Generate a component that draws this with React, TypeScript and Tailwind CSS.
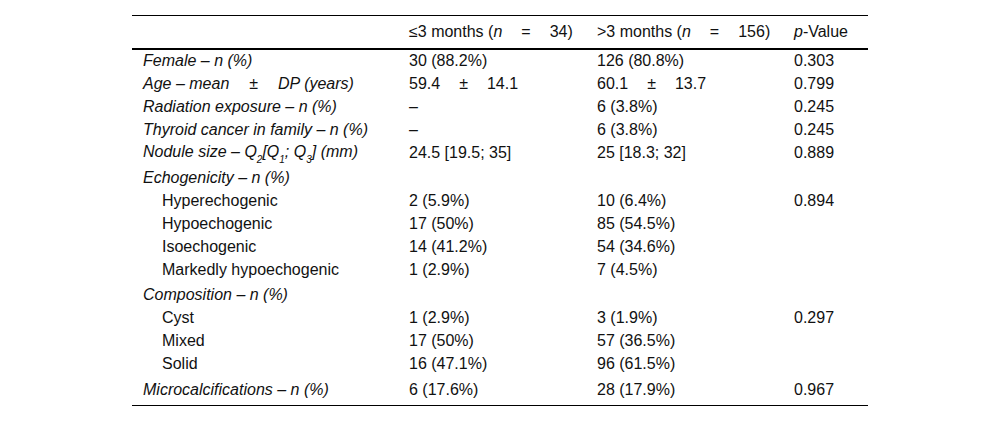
import React from "react";

type Row = {
  label: React.ReactNode;
  a?: React.ReactNode;
  b?: React.ReactNode;
  p?: string;
  sub?: boolean;
  cls?: string;
};

const PM = () => <span className="mx-[19px]">±</span>;
const Sub = ({ c }: { c: string }) => <sub className="text-[10px] align-[-3px] leading-none">{c}</sub>;

const rows: Row[] = [
  { label: <i>Female – n (%)</i>, a: "30 (88.2%)", b: "126 (80.8%)", p: "0.303" },
  {
    label: (
      <i>
        Age – mean<span className="mx-[20px]">±</span>DP (years)
      </i>
    ),
    a: (
      <>
        59.4<PM />14.1
      </>
    ),
    b: (
      <>
        60.1<PM />13.7
      </>
    ),
    p: "0.799",
  },
  { label: <i>Radiation exposure – n (%)</i>, a: "–", b: "6 (3.8%)", p: "0.245" },
  { label: <i>Thyroid cancer in family – n (%)</i>, a: "–", b: "6 (3.8%)", p: "0.245" },
  {
    label: (
      <i>
        Nodule size – Q<Sub c="2" />[Q<Sub c="1" />; Q<Sub c="3" />] (mm)
      </i>
    ),
    a: "24.5 [19.5; 35]",
    b: "25 [18.3; 32]",
    p: "0.889",
  },
  { label: <i>Echogenicity – n (%)</i>, cls: "h-[25px] pt-[2px]" },
  { label: "Hyperechogenic", sub: true, a: "2 (5.9%)", b: "10 (6.4%)", p: "0.894" },
  { label: "Hypoechogenic", sub: true, a: "17 (50%)", b: "85 (54.5%)" },
  { label: "Isoechogenic", sub: true, a: "14 (41.2%)", b: "54 (34.6%)" },
  { label: "Markedly hypoechogenic", sub: true, a: "1 (2.9%)", b: "7 (4.5%)" },
  { label: <i>Composition – n (%)</i>, cls: "h-[25px] pt-[2px]" },
  { label: "Cyst", sub: true, a: "1 (2.9%)", b: "3 (1.9%)", p: "0.297" },
  { label: "Mixed", sub: true, a: "17 (50%)", b: "57 (36.5%)" },
  { label: "Solid", sub: true, a: "16 (47.1%)", b: "96 (61.5%)" },
  {
    label: <i>Microcalcifications – n (%)</i>,
    a: "6 (17.6%)",
    b: "28 (17.9%)",
    p: "0.967",
    cls: "h-[31px] pt-[4px] pb-[4px]",
  },
];

export default function App() {
  return (
    <div
      className="bg-white w-[1000px] h-[421px] pt-[15px] text-[16px] text-[#111]"
      style={{ fontFamily: '"Liberation Sans", Arial, sans-serif' }}
    >
      <table className="mx-auto w-[736px] border-collapse table-fixed">
        <colgroup>
          <col className="w-[266px]" />
          <col className="w-[188px]" />
          <col className="w-[197px]" />
          <col className="w-[85px]" />
        </colgroup>
        <thead>
          <tr className="border-t border-black border-b-2 h-[33px]">
            <th className="text-left font-normal pl-[11px]"></th>
            <th className="text-left font-normal pl-[11px] whitespace-nowrap">
              ≤3 months (<i>n</i>
              <span className="mx-[19px]">=</span>34)
            </th>
            <th className="text-left font-normal pl-[11px] whitespace-nowrap">
              &gt;3 months (<i>n</i>
              <span className="mx-[19px]">=</span>156)
            </th>
            <th className="text-left font-normal pl-[11px] whitespace-nowrap">
              <i>p</i>-Value
            </th>
          </tr>
        </thead>
        <tbody className="border-b border-black">
          {rows.map((r, i) => {
            const c = r.cls ?? "h-[23px]";
            return (
              <tr key={i} className="leading-[19px]">
                <td className={`${r.sub ? "pl-[30px]" : "pl-[11px]"} whitespace-nowrap ${c}`}>{r.label}</td>
                <td className={`pl-[11px] whitespace-nowrap ${c}`}>{r.a}</td>
                <td className={`pl-[11px] whitespace-nowrap ${c}`}>{r.b}</td>
                <td className={`pl-[11px] whitespace-nowrap ${c}`}>{r.p}</td>
              </tr>
            );
          })}
        </tbody>
      </table>
    </div>
  );
}
